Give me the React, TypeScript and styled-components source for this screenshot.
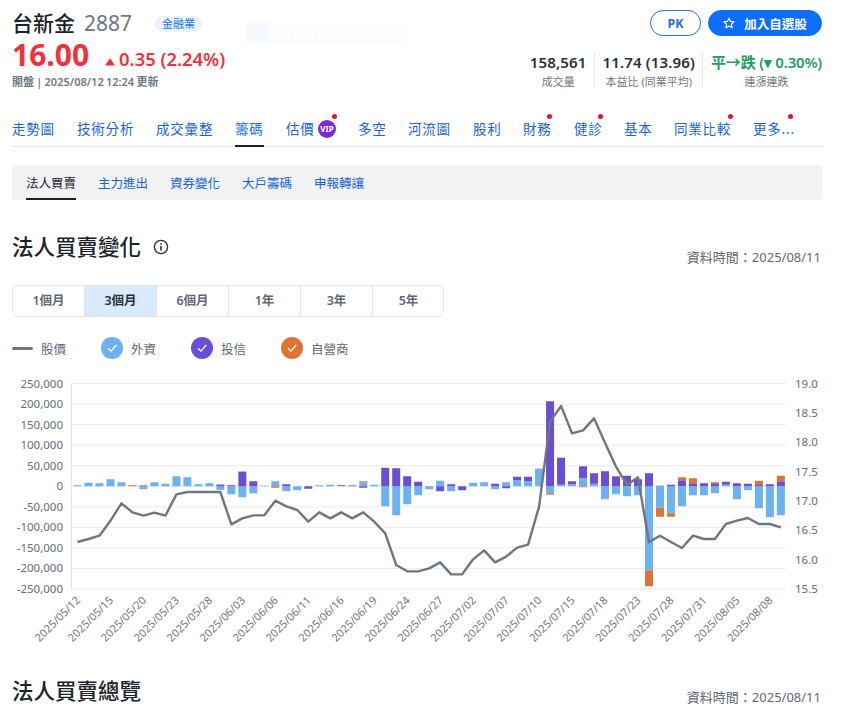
import React from "react";
import styled, { createGlobalStyle } from "styled-components";

const SANS = `"Noto Sans", "Noto Sans CJK TC", sans-serif`;

const Global = createGlobalStyle`
  html, body { margin: 0; padding: 0; background: #fff; overflow: hidden; }
  body { font-family: ${SANS}; color: #1b2229; }
  * { box-sizing: border-box; }
`;

const Page = styled.div`
  position: relative;
  width: 847px;
  height: 723px;
  padding: 0 25px 0 12px;
  overflow: hidden;
`;

const Header = styled.header`
  display: flex;
  justify-content: space-between;
  height: 104px;
`;
const Left = styled.div`
  display: flex;
  flex-direction: column;
`;
const TitleRow = styled.div`
  display: flex;
  align-items: center;
  height: 27px;
  margin-top: 10px;
`;
const Name = styled.span`
  font-size: 21px;
  line-height: 27px;
  font-weight: 500;
  color: #1b2229;
`;
const Code = styled.span`
  font-size: 21px;
  line-height: 27px;
  color: #6e7780;
  margin-left: 9px;
`;
const Tag = styled.span`
  margin-left: 23px;
  width: 47px;
  height: 16px;
  border-radius: 8px;
  background: #e8f3fe;
  color: #1a73e8;
  font-size: 11px;
  line-height: 16px;
  text-align: center;
`;
const PriceRow = styled.div`
  display: flex;
  align-items: baseline;
  color: #f0323c;
`;
const Price = styled.span`
  font-size: 30px;
  line-height: 35px;
  font-weight: 700;
`;
const Change = styled.span`
  display: inline-flex;
  align-items: baseline;
  font-size: 18.4px;
  font-weight: 600;
  margin-left: 16px;
  gap: 4px;
`;
const Updated = styled.div`
  font-size: 11px;
  line-height: 14px;
  color: #6e7780;
  font-weight: 600;
  word-spacing: -0.6px;
  margin-top: 3px;
`;
const Ghost = styled.div`
  position: absolute;
  display: flex;
  align-items: center;
  gap: 10px;
  left: 247px;
  top: 23px;
  width: 160px;
  height: 21px;
  background: #fafcfe;
  border-radius: 3px;
  color: #fff;
  font-size: 12px;
  line-height: 21px;
`;
const GhostIcon = styled.span`
  width: 23px;
  height: 21px;
  border-radius: 3px;
  background: #f6f9fd;
`;
const Right = styled.div`
  display: flex;
  flex-direction: column;
  align-items: flex-end;
`;
const Buttons = styled.div`
  display: flex;
  gap: 7px;
  margin-top: 10px;
`;
const Btn = styled.div<{ $solid?: boolean }>`
  display: flex;
  align-items: center;
  justify-content: center;
  height: 26px;
  border-radius: 13px;
  font-size: 12.5px;
  font-weight: 700;
  width: ${(p) => (p.$solid ? "114px" : "51px")};
  background: ${(p) => (p.$solid ? "#0d6efd" : "#fff")};
  color: ${(p) => (p.$solid ? "#fff" : "#2f6bd8")};
  border: 1px solid ${(p) => (p.$solid ? "#0d6efd" : "#2f6bd8")};
  gap: 9px;
`;
const Stats = styled.div`
  display: flex;
  margin-top: 16px;
`;
const Stat = styled.div<{ $border?: boolean }>`
  display: flex;
  flex-direction: column;
  align-items: center;
  height: 36px;
  padding: 0 7px 0 8px;
  border-left: ${(p) => (p.$border ? "1px solid #e6e8eb" : "none")};
  &:last-child { padding-right: 0; }
`;
const StatValue = styled.div<{ $green?: boolean }>`
  font-size: 15px;
  line-height: 20px;
  font-weight: 600;
  letter-spacing: ${(p) => (p.$green ? "-0.2px" : "0.15px")};
  color: ${(p) => (p.$green ? "#1f9e62" : "#27303a")};
  white-space: nowrap;
`;
const StatLabel = styled.div`
  font-size: 11px;
  line-height: 20px;
  color: #6e7780;
  white-space: nowrap;
`;

const Nav = styled.nav`
  display: flex;
  align-items: stretch;
  height: 43px;
  border-bottom: 1px solid #e3e6e9;
`;
const NavItem = styled.div<{ $w: number }>`
  position: relative;
  width: ${(p) => p.$w}px;
  height: 43px;
  flex: none;
  font-size: 13.5px;
  letter-spacing: 0.8px;
  line-height: 50px;
  color: #1a63d6;
  white-space: nowrap;
`;
const NavLabel = styled.span<{ $active?: boolean }>`
  display: inline-block;
  height: 43px;
  position: relative;
  color: ${(p) => (p.$active ? "#1a6fd4" : "#1a63d6")};
  border-bottom: ${(p) => (p.$active ? "2px solid #1b2229" : "none")};
`;
const Dot = styled.i<{ $l: number }>`
  position: absolute;
  left: ${(p) => p.$l}px;
  top: 10px;
  width: 5px;
  height: 5px;
  border-radius: 50%;
  background: #e8112d;
`;
const Vip = styled.b`
  position: absolute;
  left: 32px;
  top: 16px;
  width: 18px;
  height: 18px;
  border-radius: 50%;
  background: #7b2bd6;
  color: #fff;
  font-size: 8px;
  line-height: 18px;
  text-align: center;
  letter-spacing: 0;
`;

const SubNav = styled.div`
  display: flex;
  gap: 22px;
  height: 35px;
  margin-top: 18px;
  padding: 0 14px;
  background: #f0f2f4;
  border-radius: 4px;
`;
const SubItem = styled.div<{ $active?: boolean }>`
  font-size: 12.5px;
  line-height: 37px;
  height: 35px;
  color: ${(p) => (p.$active ? "#1b2229" : "#1a63d6")};
  border-bottom: ${(p) => (p.$active ? "2px solid #1b2229" : "none")};
`;

const SectionHead = styled.div<{ $h: number; $mt: number }>`
  display: flex;
  align-items: flex-end;
  justify-content: space-between;
  height: ${(p) => p.$h}px;
  margin-top: ${(p) => p.$mt}px;
`;
const SectionTitle = styled.h2`
  display: flex;
  align-items: center;
  align-self: flex-start;
  gap: 12px;
  margin: 0;
  font-size: 21.5px;
  line-height: 28px;
  font-weight: 500;
  color: #1b2229;
`;
const Stamp = styled.div`
  font-size: 13px;
  line-height: 16px;
  color: #5f6872;
  padding-right: 1px;
`;

const Ranges = styled.div`
  display: flex;
  width: 432px;
  height: 32px;
  margin-top: 20px;
  border: 1px solid #e3e6e9;
  border-radius: 4px;
  overflow: hidden;
`;
const Range = styled.div<{ $on?: boolean }>`
  width: 72px;
  flex: none;
  text-align: center;
  font-size: 12.5px;
  font-weight: 600;
  line-height: 30px;
  color: ${(p) => (p.$on ? "#27303a" : "#5f6872")};
  background: ${(p) => (p.$on ? "#d9ebfb" : "#fff")};
  &:first-child { width: 71px; }
  & + & { border-left: 1px solid #e3e6e9; }
`;

const Legend = styled.div`
  display: flex;
  align-items: center;
  height: 22px;
  margin-top: 20px;
`;
const LegendItem = styled.div<{ $w: number }>`
  display: flex;
  align-items: center;
  width: ${(p) => p.$w}px;
  gap: 8px;
  font-size: 12.5px;
  color: #5f6872;
`;
const LineKey = styled.span`
  width: 21px;
  height: 3px;
  border-radius: 2px;
  background: #6e7780;
`;
const CheckKey = styled.span<{ $c: string }>`
  display: flex;
  align-items: center;
  justify-content: center;
  width: 22px;
  height: 22px;
  border-radius: 50%;
  background: ${(p) => p.$c};
`;

const ChartWrap = styled.div`
  height: 307px;
  margin: 11px 0 0 -12px;
  width: 847px;
`;

const BLUE = "#6cb1f0";
const PURPLE = "#6a4fd4";
const ORANGE = "#dd7436";

// foreign, trust, dealer: height in px on the chart
const bars: [number, number, number][] = [
  [1, 0, 0], [3.5, 0, 0], [3, 0, 0], [7, 0, 0], [4, 0, 0], [0, 0, 1], [-3, 0, 1], [4, 0, 0], [2.5, 0, 0], [10, 0, 0],
  [9, 0, 0], [2, 0, 0], [3, 0, 0], [-3.7, 1.7, 0], [-8, 1, 0], [-11, 14.7, 0], [-7, 5, 0], [0.6, 0, 0], [5, 0, -1.5], [-5, 2, 0],
  [-4, 0, 0], [0, -2.5, 0], [1, 0, 0], [1.5, 0, 0], [0.4, 0.8, 0], [0, 0.8, 0], [4, -1.5, 1], [1.5, 0, 0], [-20, 18.5, 0], [-29, 18, 0],
  [-18, 10, 0], [-9, 4.5, 0], [-3, 0, 0], [5.5, -5, 0], [-5, 2, 0], [0, -4, 0], [3.5, 0, 0], [4, 0, 0], [-3, 2.5, 0], [4, -2, 0],
  [6, 3.5, 0], [5, 4.5, 0], [17, 0.5, 0], [-7, 85, -1.5], [1.5, 27, 0], [2, 3, 0], [8, 12, -1], [2.5, 10.5, 0], [-12.5, 15, -0.5], [-8, 10, 0],
  [-10, 10.5, 0], [-9, 7, 0], [-84, 13, -16], [-21.5, 0.5, -9], [-27, 1.5, -3.5], [-20, 6, 3], [-9, 3, 5], [-9, 3, 0], [-7, 3, 1], [1.5, 3, 0],
  [-13, 3, 0], [-4, 2.5, 0], [-22, 2, 3.5], [-31, 2, 0], [-29, 5, 5.5],
];

// price line: y in px on the chart
const lineY = [
  516, 507, 497, 452, 400, 427, 437, 428, 437, 373, 366, 366, 366, 366, 463, 445, 436, 436, 392, 409,
  420, 455, 427, 445, 427, 445, 427, 455, 490, 585, 604, 604, 595, 577, 613, 613, 568, 541, 577, 560,
  533, 524, 410, 155, 108, 190, 181, 145, 218, 290, 345, 322, 516, 497, 516, 534, 497, 507, 507, 462,
  452, 444, 462, 462, 472,
].map((z) => z / 3);

const dates = [
  "2025/05/12", "2025/05/15", "2025/05/20", "2025/05/23", "2025/05/28", "2025/06/03", "2025/06/06", "2025/06/11",
  "2025/06/16", "2025/06/19", "2025/06/24", "2025/06/27", "2025/07/02", "2025/07/07", "2025/07/10", "2025/07/15",
  "2025/07/18", "2025/07/23", "2025/07/28", "2025/07/31", "2025/08/05", "2025/08/08",
];
const leftTicks = [250000, 200000, 150000, 100000, 50000, 0, -50000, -100000, -150000, -200000, -250000];
const rightTicks = ["19.0", "18.5", "18.0", "17.5", "17.0", "16.5", "16.0", "15.5"];

const TOP = 13.5; // y of top gridline inside the svg
const PLOT_H = 205.5;
const ZERO = TOP + PLOT_H / 2;
const X0 = 77.5;
const DX = 10.99;
const BW = 8;

function Chart() {
  return (
    <svg width={847} height={307} viewBox="0 0 847 307">
      {leftTicks.map((t, i) => {
        const y = TOP + (PLOT_H * i) / 10;
        return (
          <g key={t}>
            <line x1={71} x2={786} y1={y} y2={y} stroke="#e9ebee" strokeWidth={1} />
            <text x={63} y={y + 4} textAnchor="end" fontSize={11.5} fill="#666e76" fontFamily={SANS}>
              {t.toLocaleString("en-US")}
            </text>
          </g>
        );
      })}
      <line x1={71.5} x2={71.5} y1={TOP} y2={TOP + PLOT_H} stroke="#e3e6e9" />
      {rightTicks.map((t, i) => (
        <text key={t} x={795} y={TOP + (PLOT_H * i) / 7 + 4} fontSize={11.5} fill="#666e76" fontFamily={SANS}>
          {t}
        </text>
      ))}
      {bars.map(([f, tr, d], i) => {
        const x = X0 + DX * i - BW / 2;
        let up = 0;
        let down = 0;
        const parts: React.ReactNode[] = [];
        ([[f, BLUE], [tr, PURPLE], [d, ORANGE]] as [number, string][]).forEach(([v, c], k) => {
          if (v > 0) {
            up += v;
            parts.push(<rect key={k} x={x} y={ZERO - up} width={BW} height={v} fill={c} />);
          } else if (v < 0) {
            parts.push(<rect key={k} x={x} y={ZERO + down} width={BW} height={-v} fill={c} />);
            down += -v;
          }
        });
        return <g key={i}>{parts}</g>;
      })}
      <polyline
        points={lineY.map((y, i) => `${X0 + DX * i},${y}`).join(" ")}
        fill="none"
        stroke="#6e7780"
        strokeWidth={2.4}
        strokeLinejoin="round"
      />
      {dates.map((d, i) => {
        const x = 81 + i * 32.97;
        const y = TOP + PLOT_H + 12;
        return (
          <text key={d} x={x} y={y} textAnchor="end" fontSize={11} fill="#6e767e" fontFamily={SANS} transform={`rotate(-45 ${x} ${y})`}>
            {d}
          </text>
        );
      })}
    </svg>
  );
}

const navItems: { t: string; w: number; active?: boolean; dot?: number; vip?: boolean }[] = [
  { t: "走勢圖", w: 65 },
  { t: "技術分析", w: 79 },
  { t: "成交彙整", w: 79 },
  { t: "籌碼", w: 51, active: true },
  { t: "估價", w: 72, vip: true, dot: 46 },
  { t: "多空", w: 50 },
  { t: "河流圖", w: 65 },
  { t: "股利", w: 50 },
  { t: "財務", w: 51, dot: 24 },
  { t: "健診", w: 50, dot: 24 },
  { t: "基本", w: 50 },
  { t: "同業比較", w: 79, dot: 54 },
  { t: "更多...", w: 50, dot: 35 },
];

const Check = () => (
  <svg width="12" height="12" viewBox="0 0 12 12" fill="none">
    <path d="M2 6.3 5 9.2 10.2 3" stroke="#fff" strokeWidth="1.2" fill="none" />
  </svg>
);

export default function App() {
  return (
    <Page>
      <Global />
      <Ghost><GhostIcon />看在台新金的</Ghost>
      <Header>
        <Left>
          <TitleRow>
            <Name>台新金</Name>
            <Code>2887</Code>
            <Tag>金融業</Tag>
          </TitleRow>
          <PriceRow>
            <Price>16.00</Price>
            <Change>
              <svg width="10" height="8" viewBox="0 0 11 9"><path d="M5.5 0 11 8.5H0z" fill="#f0323c" /></svg>
              <span>0.35 (2.24%)</span>
            </Change>
          </PriceRow>
          <Updated>開盤 | 2025/08/12 12:24 更新</Updated>
        </Left>
        <Right>
          <Buttons>
            <Btn>PK</Btn>
            <Btn $solid>
              <svg width="12" height="12" viewBox="0 0 24 24" fill="none" stroke="#fff" strokeWidth="2.4" strokeLinejoin="round">
                <path d="M12 2.5l3 6.4 7 .9-5.1 4.8 1.3 6.9-6.2-3.4-6.2 3.4 1.3-6.9L2 9.8l7-.9z" />
              </svg>
              加入自選股
            </Btn>
          </Buttons>
          <Stats>
            <Stat>
              <StatValue>158,561</StatValue>
              <StatLabel>成交量</StatLabel>
            </Stat>
            <Stat $border>
              <StatValue>11.74 (13.96)</StatValue>
              <StatLabel>本益比 (同業平均)</StatLabel>
            </Stat>
            <Stat $border>
              <StatValue $green>平→跌 (▾ 0.30%)</StatValue>
              <StatLabel>連漲連跌</StatLabel>
            </Stat>
          </Stats>
        </Right>
      </Header>

      <Nav>
        {navItems.map((n) => (
          <NavItem key={n.t} $w={n.w}>
            <NavLabel $active={n.active}>{n.t}</NavLabel>
            {n.vip && <Vip>VIP</Vip>}
            {n.dot !== undefined && <Dot $l={n.dot} />}
          </NavItem>
        ))}
      </Nav>

      <SubNav>
        <SubItem $active>法人買賣</SubItem>
        <SubItem>主力進出</SubItem>
        <SubItem>資券變化</SubItem>
        <SubItem>大戶籌碼</SubItem>
        <SubItem>申報轉讓</SubItem>
      </SubNav>

      <SectionHead $h={32} $mt={33}>
        <SectionTitle>
          法人買賣變化
          <svg width="16" height="16" viewBox="0 0 16 16" fill="none" stroke="#27303a" strokeWidth="1.3">
            <circle cx="8" cy="8" r="6.6" />
            <path d="M8 7v4.5" strokeWidth="1.6" />
            <path d="M8 4.2v1.6" strokeWidth="1.6" />
          </svg>
        </SectionTitle>
        <Stamp>資料時間：2025/08/11</Stamp>
      </SectionHead>

      <Ranges>
        <Range>1個月</Range>
        <Range $on>3個月</Range>
        <Range>6個月</Range>
        <Range>1年</Range>
        <Range>3年</Range>
        <Range>5年</Range>
      </Ranges>

      <Legend>
        <LegendItem $w={89}><LineKey />股價</LegendItem>
        <LegendItem $w={90}><CheckKey $c={BLUE}><Check /></CheckKey>外資</LegendItem>
        <LegendItem $w={90}><CheckKey $c={PURPLE}><Check /></CheckKey>投信</LegendItem>
        <LegendItem $w={90}><CheckKey $c={ORANGE}><Check /></CheckKey>自營商</LegendItem>
      </Legend>

      <ChartWrap>
        <Chart />
      </ChartWrap>

      <SectionHead $h={28} $mt={0}>
        <SectionTitle>法人買賣總覽</SectionTitle>
        <Stamp>資料時間：2025/08/11</Stamp>
      </SectionHead>
    </Page>
  );
}
